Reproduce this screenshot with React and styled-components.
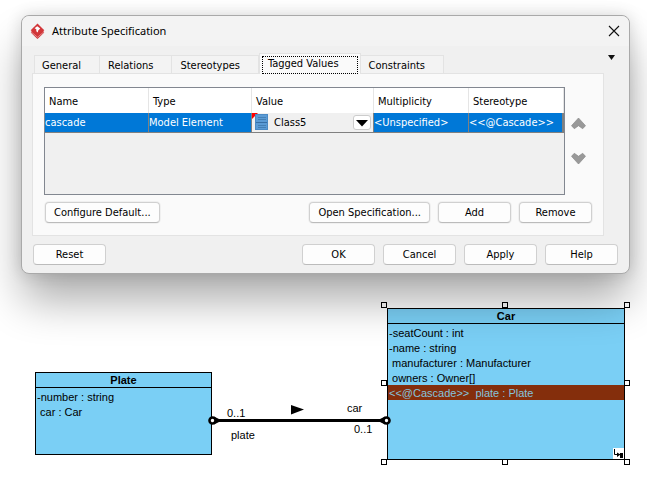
import React from "react";
import styled, { createGlobalStyle } from "styled-components";

const uiFont = '"DejaVu Sans Condensed", "Noto Sans", sans-serif';
const diagramFont = '"Liberation Sans", Arial, sans-serif';

const GlobalStyle = createGlobalStyle`
  * { box-sizing: border-box; }
  body { margin: 0; background: #fff; color: #000; }
  button, select { font: inherit; color: inherit; }
`;

const Desktop = styled.main`
  display: flex;
  flex-direction: column;
  overflow: hidden;
  padding-top: 15px;
`;

const Dialog = styled.section`
  position: relative;
  z-index: 1;
  display: flex;
  flex-direction: column;
  margin: 0 17px 0 21px;
  border: 1px solid #a9a9a9;
  border-radius: 8px;
  background: #f0f0f0;
  box-shadow:
    0 28px 44px -2px rgba(0, 0, 0, 0.33),
    0 0 16px rgba(0, 0, 0, 0.14);
  font: 11px/14px ${uiFont};
`;

const TitleBar = styled.header`
  display: flex;
  align-items: center;
  height: 30px;
  padding: 0 9px 0 8px;
  border-radius: 8px 8px 0 0;
  background: #f3f3f3;
`;

const Title = styled.h1`
  flex: 1;
  margin: 0 0 0 7px;
  font: 400 11px/16px "Noto Sans", sans-serif;
`;

const IconButton = styled.button`
  display: flex;
  align-items: center;
  justify-content: center;
  padding: 0;
  border: 0;
  background: none;
`;

const Body = styled.div`
  display: flex;
  flex-direction: column;
  padding: 7px 10px 8px;
`;

const TabRow = styled.div`
  display: flex;
  justify-content: space-between;
  align-items: flex-start;
  padding-right: 2px;
`;

const TabList = styled.div`
  display: flex;
  align-items: flex-end;
  height: 20px;
  padding-left: 2px;
`;

const Tab = styled.button`
  position: relative;
  z-index: ${(p) => (p.$active ? 1 : 0)};
  height: ${(p) => (p.$active ? 21 : 18)}px;
  margin-bottom: ${(p) => (p.$active ? -1 : 0)}px;
  padding: ${(p) => (p.$active ? "1px 2px 0" : "2px 18px 0 8px")};
  border: solid #e3e3e3;
  border-width: 1px 1px 0 ${(p) => (p.$active ? 1 : 0)}px;
  background: ${(p) => (p.$active ? "#fafafa" : "#f3f3f3")};
  white-space: nowrap;
  &:first-child { border-left-width: 1px; padding-left: 7px; }
`;

const FocusRing = styled.span`
  display: block;
  height: 18px;
  padding: 0 18px 0 5px;
  border: 1px dotted #000;
`;

const Panel = styled.div`
  display: flex;
  flex-direction: column;
  gap: 7px;
  margin-right: 15px;
  padding: 13px 11px 12px;
  border: 1px solid #e3e3e3;
  background: #fafafa;
`;

const TableArea = styled.div`
  display: flex;
  gap: 4px;
`;

const TableFrame = styled.div`
  flex: 1;
  height: 108px;
  border: 1px solid #828790;
  background: #f0f0f0;
`;

const Table = styled.table`
  width: 100%;
  table-layout: fixed;
  border-collapse: separate;
  border-spacing: 0;
`;

const Th = styled.th`
  height: 25px;
  padding: 2px 4px 0;
  border-right: 1px solid #e5e5e5;
  background: #fff;
  font-weight: 400;
  text-align: left;
`;

const Td = styled.td`
  height: 20px;
  padding: 0;
  border-right: 1px solid #808080;
  border-bottom: 1px solid #808080;
  background: ${(p) => (p.$plain ? "#f0f0f0" : "#0078d7")};
  color: ${(p) => (p.$plain ? "#000" : "#fff")};
  white-space: nowrap;
  &:last-child { border-right-width: 2px; }
`;

const Combo = styled.label`
  display: flex;
  align-items: center;
  height: 19px;
`;

const Select = styled.select`
  flex: 1;
  height: 19px;
  padding: 0 0 0 5px;
  border: 0;
  appearance: none;
  background: transparent;
`;

const Arrow = styled.span`
  display: flex;
  align-items: center;
  justify-content: center;
  width: 18px;
  height: 15px;
  margin-right: 2px;
  border: 1px solid #ccc;
  border-radius: 3px;
  background: #fff;
  pointer-events: none;
`;

const OrderButtons = styled.div`
  display: flex;
  flex-direction: column;
  align-items: flex-start;
  gap: 22px;
  width: 23px;
  padding: 30px 0 0 2px;
`;

const ButtonRow = styled.div`
  display: flex;
  gap: 8px;
  padding: ${(p) => (p.$inPanel ? "0 0 0 1px" : "8px 1px 0")};
`;

const Button = styled.button`
  min-width: 73px;
  height: 21px;
  padding: 0 8px;
  border: 1px solid #d0d0d0;
  border-bottom-color: #bbb;
  border-radius: 4px;
  background: #fdfdfd;
  box-shadow: ${(p) => (p.$inPanel ? "0 0 0 1px #f0f0f0" : "none")};
  white-space: nowrap;
  &:first-child { margin-right: auto; }
`;

const Canvas = styled.section`
  position: relative;
  height: 212px;
  font: 11px/15px ${diagramFont};
`;

const ClassBox = styled.article`
  position: absolute;
  left: ${(p) => p.$x}px;
  top: ${(p) => p.$y}px;
  width: ${(p) => p.$w}px;
  height: ${(p) => p.$h}px;
  border: 1px solid #000;
  background: #7acff5;
`;

const ClassName = styled.h2`
  margin: 0;
  height: 15px;
  border-bottom: 1px solid #000;
  font: 700 11px/15px ${diagramFont};
  text-align: center;
`;

const Attributes = styled.ul`
  margin: 1px 0 0;
  padding: 0;
  list-style: none;
`;

const Attribute = styled.li`
  height: 15px;
  padding-left: 1px;
  line-height: 16px;
  white-space: pre;
  background: ${(p) => (p.$selected ? "#842e0c" : "none")};
  color: ${(p) => (p.$selected ? "#85c3dd" : "#000")};
`;

const Handle = styled.span`
  position: absolute;
  left: ${(p) => p.$x}px;
  top: ${(p) => p.$y}px;
  width: 6px;
  height: 6px;
  border: 1px solid #000;
  background: #fff;
`;

const EdgeLabel = styled.span`
  position: absolute;
  left: ${(p) => p.$x}px;
  top: ${(p) => p.$y}px;
`;

const Association = styled.svg`
  position: absolute;
  left: 207px;
  top: 128px;
`;

const Resource = styled.svg`
  position: absolute;
  right: 0;
  bottom: 0;
`;

const tabs = ["General", "Relations", "Stereotypes", "Tagged Values", "Constraints"];
const columns = [
  ["Name", "104px"],
  ["Type", "103px"],
  ["Value", "122px"],
  ["Multiplicity", "95px"],
  ["Stereotype", "auto"],
];
const handles = [
  [381, 28], [502, 28], [624, 28],
  [381, 106], [624, 106],
  [381, 185], [502, 185], [624, 185],
];

function Logo() {
  return (
    <svg width="15" height="17" viewBox="0 0 15 17" aria-hidden="true">
      <path d="M.8 9.500 7.500 16 14.200 9.500 12.500 7h-10z" fill="#cf3437" />
      <path d="M1.200 9 7.500 14.200 13.800 9" fill="none" stroke="#f0c4c5" strokeWidth=".6" />
      <path d="M7.500.4 14.300 7.200 7.500 13.200.7 7.200z" fill="#d23639" />
      <path d="M4.600 5.300 7.200 3.300 10.200 5.600 8.200 7.600 7.800 9.600 6.300 8.200V6.200z" fill="#fff" />
    </svg>
  );
}

function Chevron({ down }) {
  return (
    <svg width="15" height="13" viewBox="0 0 15 13" aria-hidden="true">
      <path
        d={down
          ? "M.5 4.300 3.300 1.300 7.500 4.300 11.700 1.300 14.500 4.300 7.500 12z"
          : "M.5 8.700 7.500 1 14.500 8.700 11.700 11.700 7.500 8.700 3.300 11.700z"}
        fill="#999"
        stroke="#8a8a8a"
        strokeWidth=".7"
        strokeLinejoin="round"
      />
    </svg>
  );
}

function ClassIcon() {
  return (
    <svg width="17" height="19" viewBox="0 0 17 19" aria-hidden="true">
      <path d="M0 0h6L0 6z" fill="#f00" />
      <rect x="3.500" y="1.500" width="12" height="15" fill="#5b9bd5" stroke="#4b8ac4" />
      <path d="M4 9.500h11" stroke="#376fa5" />
      <path d="M6 4.500h8M6 6.500h8M6 12.500h8M6 14.500h8" stroke="#3f78ac" strokeWidth=".8" />
    </svg>
  );
}

function ValueCombo() {
  return (
    <Combo>
      <ClassIcon />
      <Select aria-label="Value" defaultValue="Class5">
        <option>Class5</option>
      </Select>
      <Arrow>
        <svg width="14" height="8" viewBox="0 0 14 8" aria-hidden="true">
          <path d="M1 1h12L7 7.500z" />
        </svg>
      </Arrow>
    </Combo>
  );
}

export default function App() {
  return (
    <Desktop>
      <GlobalStyle />
      <Dialog role="dialog" aria-labelledby="title">
        <TitleBar>
          <Logo />
          <Title id="title">Attribute Specification</Title>
          <IconButton aria-label="Close">
            <svg width="12" height="12" viewBox="0 0 12 12" aria-hidden="true">
              <path d="M1 1 11 11M11 1 1 11" stroke="#111" strokeWidth="1.100" />
            </svg>
          </IconButton>
        </TitleBar>
        <Body>
          <TabRow>
            <TabList role="tablist">
              {tabs.map((t, i) => (
                <Tab key={t} role="tab" aria-selected={i === 3} $active={i === 3}>
                  {i === 3 ? <FocusRing>{t}</FocusRing> : t}
                </Tab>
              ))}
            </TabList>
            <IconButton aria-label="Tab list">
              <svg width="11" height="8" viewBox="0 0 11 8" aria-hidden="true">
                <path d="M2 2h7L5.500 7z" fill="#111" />
              </svg>
            </IconButton>
          </TabRow>
          <Panel role="tabpanel">
            <TableArea>
              <TableFrame>
                <Table>
                  <colgroup>
                    {columns.map(([name, width]) => <col key={name} width={width} />)}
                  </colgroup>
                  <thead>
                    <tr>{columns.map(([name]) => <Th key={name} scope="col">{name}</Th>)}</tr>
                  </thead>
                  <tbody>
                    <tr>
                      <Td>cascade</Td>
                      <Td>Model Element</Td>
                      <Td $plain><ValueCombo /></Td>
                      <Td>&lt;Unspecified&gt;</Td>
                      <Td>&lt;&lt;@Cascade&gt;&gt;</Td>
                    </tr>
                  </tbody>
                </Table>
              </TableFrame>
              <OrderButtons>
                <IconButton aria-label="Move up"><Chevron /></IconButton>
                <IconButton aria-label="Move down"><Chevron down /></IconButton>
              </OrderButtons>
            </TableArea>
            <ButtonRow $inPanel>
              {["Configure Default...", "Open Specification...", "Add", "Remove"].map((b) => (
                <Button key={b} $inPanel>{b}</Button>
              ))}
            </ButtonRow>
          </Panel>
          <ButtonRow>
            {["Reset", "OK", "Cancel", "Apply", "Help"].map((b) => (
              <Button key={b}>{b}</Button>
            ))}
          </ButtonRow>
        </Body>
      </Dialog>

      <Canvas aria-label="Class diagram">
        <ClassBox $x={35} $y={98} $w={177} $h={83}>
          <ClassName>Plate</ClassName>
          <Attributes>
            <Attribute>-number : string</Attribute>
            <Attribute> car : Car</Attribute>
          </Attributes>
        </ClassBox>
        <ClassBox $x={387} $y={34} $w={238} $h={152}>
          <ClassName>Car</ClassName>
          <Attributes>
            <Attribute>-seatCount : int</Attribute>
            <Attribute>-name : string</Attribute>
            <Attribute> manufacturer : Manufacturer</Attribute>
            <Attribute> owners : Owner[]</Attribute>
            <Attribute $selected>{"<<@Cascade>>  plate : Plate"}</Attribute>
          </Attributes>
          <Resource width="11" height="11" viewBox="0 0 11 11" aria-hidden="true">
            <path d="M0 0h11v11H0z" fill="#fff" />
            <path d="M1.500 1v5.500H7" fill="none" stroke="#000" />
            <path d="M4 4.500 7.500 6.500 4 9zM7 5h3v5H7z" />
          </Resource>
        </ClassBox>
        {handles.map(([x, y]) => <Handle key={`${x}-${y}`} $x={x} $y={y} />)}
        <Association width="186" height="36" viewBox="0 0 186 36" aria-hidden="true">
          <path d="M84 3v9.500L97 7.500z" />
          <path d="M6 18.500H179" stroke="#000" strokeWidth="3" />
          <path d="M7 14.500 12 17v3l-5 2.500zM178 14.500 173 17v3l5 2.500z" />
          <circle cx="5.500" cy="18.500" r="3" fill="#fff" stroke="#000" strokeWidth="2.600" />
          <circle cx="179.500" cy="18.500" r="3" fill="#fff" stroke="#000" strokeWidth="2.600" />
        </Association>
        <EdgeLabel $x={227} $y={132}>0..1</EdgeLabel>
        <EdgeLabel $x={231} $y={154}>plate</EdgeLabel>
        <EdgeLabel $x={347} $y={127}>car</EdgeLabel>
        <EdgeLabel $x={354} $y={148}>0..1</EdgeLabel>
      </Canvas>
    </Desktop>
  );
}
